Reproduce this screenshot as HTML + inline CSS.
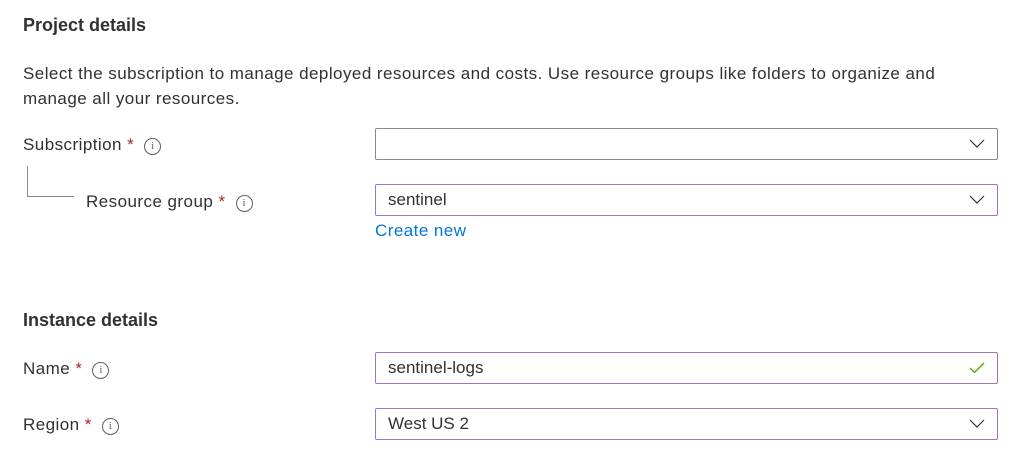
<!DOCTYPE html>
<html><head><style>
body{margin:0;width:1026px;height:464px;background:#fff;font-family:"Liberation Sans",sans-serif;color:#323130;position:relative;overflow:hidden}
.a{position:absolute;white-space:nowrap}
h{position:absolute;font-weight:bold;font-size:18px;left:23px}
.t{font-size:17px;letter-spacing:0.45px}
.s{color:#a4262c}
.i{display:inline-block;width:15px;height:15px;border:1px solid #605e5c;border-radius:50%;font-size:11px;line-height:15px;text-align:center;vertical-align:1px;color:#605e5c;margin-left:10px;font-family:"Liberation Serif",serif;letter-spacing:0}
.b{position:absolute;left:375px;height:30px;border:1.5px solid #8a8886;border-radius:2px;font-size:17px;line-height:30px;padding-left:12px;box-sizing:content-box;width:609px}
.p{border-color:#a173b8}
.c{position:absolute;right:12px;top:10px}
</style></head><body>
<h style="top:15px">Project details</h>
<div class="a t" style="left:23px;top:61px;line-height:25px">Select the subscription to manage deployed resources and costs. Use resource groups like folders to organize and<br>manage all your resources.</div>
<div class="a t" style="left:23px;top:135px">Subscription <span class="s">*</span><span class="i">i</span></div>
<div class="a" style="left:27px;top:166px;width:46px;height:30px;border-left:1px solid #8a8886;border-bottom:1px solid #8a8886"></div>
<div class="a t" style="left:86px;top:192px">Resource group <span class="s">*</span><span class="i">i</span></div>
<div class="b" style="top:128px"><svg class="c" width="16" height="10"><path d="M1 1l7 7 7-7" fill="none" stroke="#323130" stroke-width="1.2"/></svg></div>
<div class="b p" style="top:184px">sentinel<svg class="c" width="16" height="10"><path d="M1 1l7 7 7-7" fill="none" stroke="#323130" stroke-width="1.2"/></svg></div>
<div class="a t" style="left:375px;top:221px;color:#0078d4">Create new</div>
<h style="top:310px">Instance details</h>
<div class="a t" style="left:23px;top:359px">Name <span class="s">*</span><span class="i">i</span></div>
<div class="b p" style="top:352px">sentinel-logs<svg class="c" width="16" height="12" style="top:9px"><path d="M1 6l4.5 4.5L15 1" fill="none" stroke="#57a300" stroke-width="1.3"/></svg></div>
<div class="a t" style="left:23px;top:415px">Region <span class="s">*</span><span class="i">i</span></div>
<div class="b p" style="top:408px">West US 2<svg class="c" width="16" height="10"><path d="M1 1l7 7 7-7" fill="none" stroke="#323130" stroke-width="1.2"/></svg></div>
</body></html>
